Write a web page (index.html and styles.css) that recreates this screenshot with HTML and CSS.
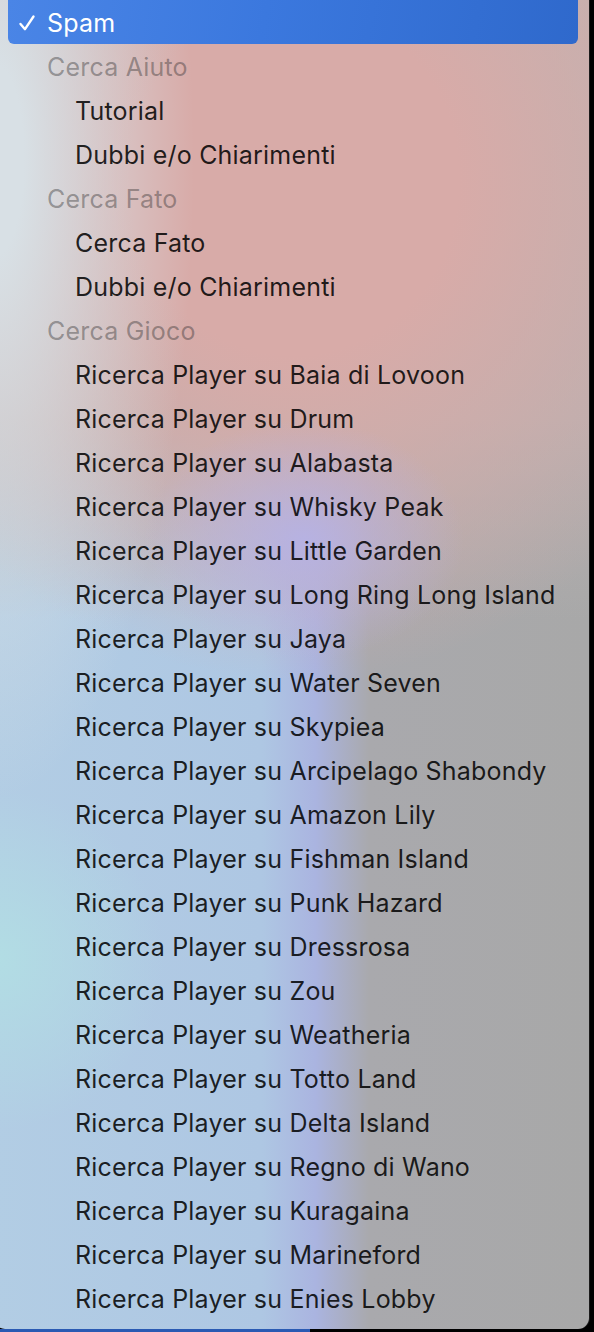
FILE: index.html
```html
<!DOCTYPE html>
<html lang="it">
<head>
  <meta charset="UTF-8">
  <title>Categoria</title>
  <link rel="stylesheet" href="styles.css">
</head>
<body>

<div class="menu">
  <div class="opt selected">
    <svg class="check" width="18" height="18" viewBox="0 0 18 18"><path d="M2.5 10 L7 15.2 L15.5 2.5" fill="none" stroke="#fff" stroke-width="2.4" stroke-linecap="round" stroke-linejoin="round"/></svg>
    Spam
  </div>

  <div class="group">Cerca Aiuto</div>
  <div class="opt">Tutorial</div>
  <div class="opt">Dubbi e/o Chiarimenti</div>

  <div class="group">Cerca Fato</div>
  <div class="opt">Cerca Fato</div>
  <div class="opt">Dubbi e/o Chiarimenti</div>

  <div class="group">Cerca Gioco</div>
  <div class="opt">Ricerca Player su Baia di Lovoon</div>
  <div class="opt">Ricerca Player su Drum</div>
  <div class="opt">Ricerca Player su Alabasta</div>
  <div class="opt">Ricerca Player su Whisky Peak</div>
  <div class="opt">Ricerca Player su Little Garden</div>
  <div class="opt">Ricerca Player su Long Ring Long Island</div>
  <div class="opt">Ricerca Player su Jaya</div>
  <div class="opt">Ricerca Player su Water Seven</div>
  <div class="opt">Ricerca Player su Skypiea</div>
  <div class="opt">Ricerca Player su Arcipelago Shabondy</div>
  <div class="opt">Ricerca Player su Amazon Lily</div>
  <div class="opt">Ricerca Player su Fishman Island</div>
  <div class="opt">Ricerca Player su Punk Hazard</div>
  <div class="opt">Ricerca Player su Dressrosa</div>
  <div class="opt">Ricerca Player su Zou</div>
  <div class="opt">Ricerca Player su Weatheria</div>
  <div class="opt">Ricerca Player su Totto Land</div>
  <div class="opt">Ricerca Player su Delta Island</div>
  <div class="opt">Ricerca Player su Regno di Wano</div>
  <div class="opt">Ricerca Player su Kuragaina</div>
  <div class="opt">Ricerca Player su Marineford</div>
  <div class="opt">Ricerca Player su Enies Lobby</div>
</div>
<div class="under"></div>

</body>
</html>
```
FILE: styles.css
```css
* { box-sizing: border-box; margin: 0; padding: 0; }

body {
  background: #000;
  font-family: Inter, "Noto Sans", sans-serif;
  width: 594px;
  height: 1332px;
  overflow: hidden;
}

.menu {
  width: 595px;
  margin-left: -6px;
  padding: 0 0 9px 14px;
  border-radius: 0 0 11px 11px;
  background:
    radial-gradient(circle at 0 960px, rgba(178,222,228,0.95), rgba(178,222,228,0) 170px),
    radial-gradient(ellipse 160px 120px at 310px 540px, rgba(182,178,228,0.95), rgba(182,178,228,0)),
    radial-gradient(ellipse 200px 640px at 0 160px, #d8e0e5 15%, rgba(216,224,229,0) 100%),
    radial-gradient(ellipse 470px 500px at 300px 180px, #d8aba8 35%, rgba(216,171,168,0) 100%),
    linear-gradient(180deg, #bdb3b2 0, #b8b0b0 420px, rgba(168,168,168,0) 620px),
    linear-gradient(90deg, #b2cde4 0%, #aec7e3 45%, #aab4e0 54%, #a9a9ad 63%, #a8a8a8 100%);
  box-shadow: 1px 0 0 #1a1a1a;
}

.opt, .group {
  height: 44px;
  display: flex;
  align-items: center;
  padding-top: 1px;
  font-size: 25px;
  letter-spacing: 0.2px;
  white-space: nowrap;
}

.opt {
  padding-left: 67px;
  color: rgba(0,0,0,0.86);
}

.group {
  padding-left: 39px;
  color: rgba(40,40,40,0.4);
}

.opt.selected {
  width: 570px;
  padding-left: 10px;
  gap: 11px;
  color: #fff;
  border-radius: 0 0 6px 6px;
  background: linear-gradient(100deg, #4a85e6 0%, #3b78de 45%, #2f69cc 100%);
}

.check {
  flex: 0 0 auto;
}

.under {
  width: 310px;
  height: 4px;
  background: #2a5ab3;
}
```
